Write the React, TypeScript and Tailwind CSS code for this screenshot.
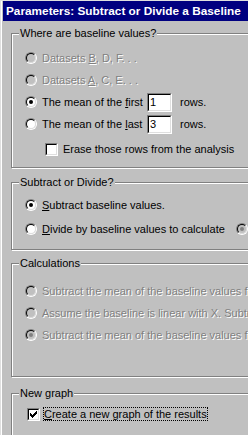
import React from "react";

type RadioProps = { checked?: boolean; disabled?: boolean };

const Radio = ({ checked, disabled }: RadioProps) => (
  <div className="w-[12px] h-[12px] shrink-0 rounded-full border border-t-[#808080] border-l-[#808080] border-r-white border-b-white">
    <div
      className={`w-full h-full rounded-full border border-t-black border-l-black border-r-[#dfdfdf] border-b-[#dfdfdf] flex items-center justify-center ${
        disabled ? "bg-[#c0c0c0]" : "bg-white"
      }`}
    >
      {checked && (
        <div className={`w-[4px] h-[4px] rounded-full ${disabled ? "bg-[#808080]" : "bg-black"}`} />
      )}
    </div>
  </div>
);

const Checkbox = ({ checked }: { checked?: boolean }) => (
  <div className="w-[13px] h-[13px] shrink-0 border border-t-[#808080] border-l-[#808080] border-r-white border-b-white">
    <div className="w-full h-full border border-t-black border-l-black border-r-[#dfdfdf] border-b-[#dfdfdf] bg-white flex items-center justify-center">
      {checked && (
        <svg width="7" height="7" viewBox="0 0 7 7" shapeRendering="crispEdges">
          <path
            d="M0 2h1v3h-1z M1 3h1v3h-1z M2 4h1v3h-1z M3 3h1v3h-1z M4 2h1v3h-1z M5 1h1v3h-1z M6 0h1v3h-1z"
            fill="#000"
          />
        </svg>
      )}
    </div>
  </div>
);

const TextBox = ({ value }: { value: string }) => (
  <div className="w-[25px] h-[19px] shrink-0 border border-t-[#808080] border-l-[#808080] border-r-white border-b-white">
    <div className="w-full h-full border border-t-black border-l-black border-r-[#dfdfdf] border-b-[#dfdfdf] bg-white pl-[1px] flex items-center leading-[13px]">
      {value}
    </div>
  </div>
);

const Dis = ({ children }: { children: React.ReactNode }) => (
  <span className="text-[#808080] [text-shadow:1px_1px_0_#fff] whitespace-nowrap">{children}</span>
);

type GroupProps = { label: string; className: string; children: React.ReactNode };

const Group = ({ label, className, children }: GroupProps) => (
  <div
    className={`relative w-[400px] ml-[10px] border border-[#808080] shadow-[inset_1px_1px_0_#fff,1px_1px_0_#fff] ${className}`}
  >
    <span className="absolute -top-[7px] left-[7px] px-[1px] leading-[13px] bg-[#c0c0c0] text-black whitespace-nowrap">
      {label}
    </span>
    {children}
  </div>
);

export default function App() {
  return (
    <div className="w-[248px] h-[435px] overflow-hidden bg-[#c0c0c0] border-t border-l border-[#dfdfdf] shadow-[inset_1px_0_0_#fff] font-['Liberation_Sans',Arial,sans-serif] text-[11px] leading-[13px] text-black">
      <div className="ml-[2px] w-[400px] h-[20px] bg-[#000080] pl-[3px] flex items-center text-white font-bold text-[11.8px] whitespace-nowrap">
        Parameters: Subtract or Divide a Baseline
      </div>

      <Group label="Where are baseline values?" className="mt-[12px] h-[135px] pt-[13px]">
        <div className="h-[22px] flex items-center pl-[13px]">
          <Radio disabled />
          <span className="ml-[5px]">
            <Dis>
              Datasets <u>B</u>, D, F. . .
            </Dis>
          </span>
        </div>
        <div className="h-[22px] flex items-center pl-[13px]">
          <Radio disabled />
          <span className="ml-[5px]">
            <Dis>
              Datasets <u>A</u>, C, E. . .
            </Dis>
          </span>
        </div>
        <div className="h-[22px] flex items-center pl-[13px]">
          <Radio checked />
          <span className="ml-[5px] w-[105px] whitespace-nowrap">
            The mean of the <u>f</u>irst
          </span>
          <TextBox value="1" />
          <span className="ml-[8px]">rows.</span>
        </div>
        <div className="h-[22px] flex items-center pl-[13px]">
          <Radio />
          <span className="ml-[5px] w-[105px] whitespace-nowrap">
            The mean of the <u>l</u>ast
          </span>
          <TextBox value="3" />
          <span className="ml-[8px]">rows.</span>
        </div>
        <div className="mt-[3px] h-[22px] flex items-center pl-[33px]">
          <Checkbox />
          <span className="ml-[5px] whitespace-nowrap">Erase those rows from the analysis</span>
        </div>
      </Group>

      <Group label="Subtract or Divide?" className="mt-[14px] h-[68px] pt-[10px]">
        <div className="h-[24px] flex items-center pl-[13px]">
          <Radio checked />
          <span className="ml-[5px] whitespace-nowrap">
            <u>S</u>ubtract baseline values.
          </span>
        </div>
        <div className="h-[24px] flex items-center pl-[13px]">
          <Radio />
          <span className="ml-[5px] w-[194px] whitespace-nowrap">
            <u>D</u>ivide by baseline values to calculate
          </span>
          <Radio checked disabled />
        </div>
      </Group>

      <Group label="Calculations" className="mt-[13px] h-[114px] pt-[16px]">
        <div className="h-[22px] flex items-center pl-[13px]">
          <Radio disabled />
          <span className="ml-[5px]">
            <Dis>Subtract the mean of the baseline values from each value</Dis>
          </span>
        </div>
        <div className="h-[22px] flex items-center pl-[13px]">
          <Radio disabled />
          <span className="ml-[5px]">
            <Dis>Assume the baseline is linear with X. Subtract the line</Dis>
          </span>
        </div>
        <div className="h-[22px] flex items-center pl-[13px]">
          <Radio checked disabled />
          <span className="ml-[5px]">
            <Dis>Subtract the mean of the baseline values from each row</Dis>
          </span>
        </div>
      </Group>

      <Group label="New graph" className="mt-[16px] h-[100px] pt-[9px]">
        <div className="h-[22px] flex items-center pl-[15px]">
          <Checkbox checked />
          <span className="ml-[3px] border border-dotted border-black leading-[12px] whitespace-nowrap">
            <u>C</u>reate a new graph of the results
          </span>
        </div>
      </Group>
    </div>
  );
}
